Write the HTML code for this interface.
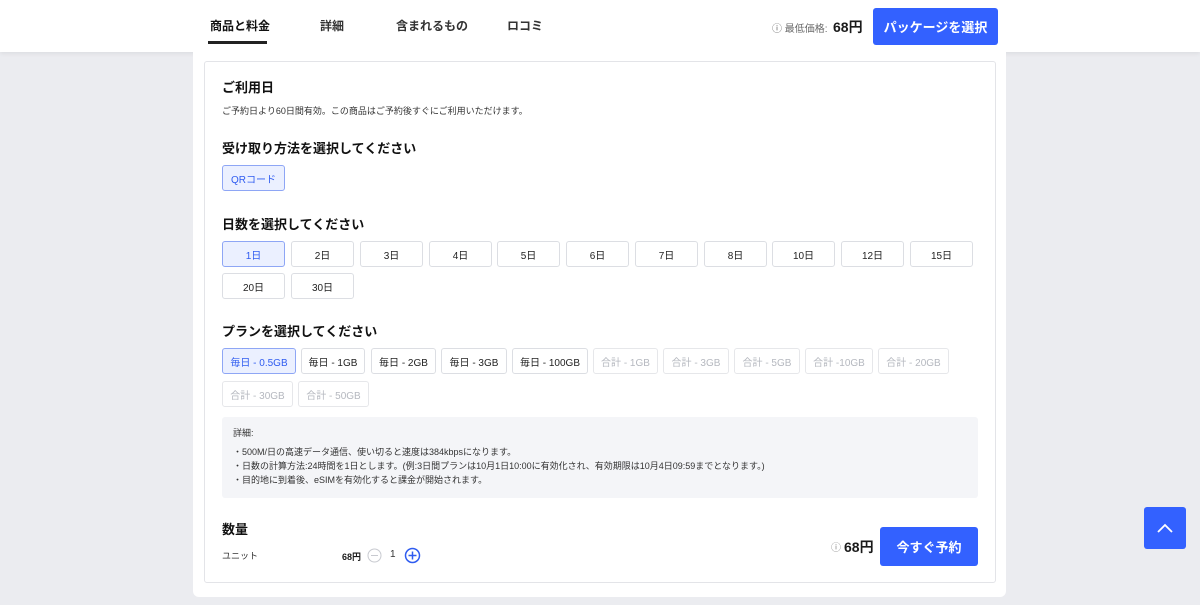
<!DOCTYPE html>
<html><head><meta charset="utf-8"><style>
*{box-sizing:border-box;margin:0;padding:0}
body{width:1200px;height:605px;background:#ebecf0;font-family:"Liberation Sans","Noto Sans CJK JP",sans-serif;color:#1a1a1a;position:relative;overflow:hidden}
.hdr{position:absolute;left:0;top:0;width:1200px;height:52px;background:#fff;box-shadow:0 2px 4px rgba(0,0,0,.06)}
.tab{position:absolute;top:17px;font-size:12px;font-weight:bold;color:#333}
.ul{position:absolute;left:208px;top:41px;width:59px;height:3px;background:#222}
.a{position:absolute}
.panel{position:absolute;left:193px;top:52px;width:813px;height:545px;background:#fff;border-radius:0 0 6px 6px}
.card{position:absolute;left:204px;top:61px;width:792px;height:522px;border:1px solid #e3e4e8;border-radius:3px}
h3{position:absolute;left:222px;font-size:13px;font-weight:bold;color:#111}
.b{position:absolute;height:26px;border:1px solid #dcdee3;border-radius:3px;font-size:10px;color:#222;display:flex;align-items:center;justify-content:center;background:#fff}
.sel{background:#ebf0ff;border-color:#8ea6f5;color:#2f5cf0}
.dis{color:#b5b8bf;border-color:#e6e7ea}
.blue{background:#3361ff;color:#fff;font-weight:bold;border-radius:3px;display:flex;align-items:center;justify-content:center}
</style></head><body>
<div class="hdr">
<div class="tab" style="left:210px;color:#111">商品と料金</div>
<div class="ul"></div>
<div class="tab" style="left:320px">詳細</div>
<div class="tab" style="left:396px">含まれるもの</div>
<div class="tab" style="left:507px">ロコミ</div>
<div class="a" style="left:772px;top:20px;font-size:10px;color:#666">ⓘ 最低価格:</div>
<div class="a" style="left:833px;top:17px;font-size:14px;font-weight:bold">68円</div>
<div class="a blue" style="left:873px;top:8px;width:125px;height:37px;font-size:13px">パッケージを選択</div>
</div>
<div class="panel"></div>
<div class="card"></div>
<h3 style="top:77px">ご利用日</h3>
<div class="a" style="left:222px;top:104px;font-size:9px;color:#333">ご予約日より60日間有効。この商品はご予約後すぐにご利用いただけます。</div>
<h3 style="top:138px">受け取り方法を選択してください</h3>
<div class="b sel" style="left:222px;top:165px;width:63px">QRコード</div>
<h3 style="top:214px">日数を選択してください</h3>
<div class="b sel" style="left:222px;top:241px;width:63px">1日</div>
<div class="b" style="left:291px;top:241px;width:63px">2日</div>
<div class="b" style="left:360px;top:241px;width:63px">3日</div>
<div class="b" style="left:429px;top:241px;width:63px">4日</div>
<div class="b" style="left:497px;top:241px;width:63px">5日</div>
<div class="b" style="left:566px;top:241px;width:63px">6日</div>
<div class="b" style="left:635px;top:241px;width:63px">7日</div>
<div class="b" style="left:704px;top:241px;width:63px">8日</div>
<div class="b" style="left:772px;top:241px;width:63px">10日</div>
<div class="b" style="left:841px;top:241px;width:63px">12日</div>
<div class="b" style="left:910px;top:241px;width:63px">15日</div>
<div class="b" style="left:222px;top:273px;width:63px">20日</div>
<div class="b" style="left:291px;top:273px;width:63px">30日</div>
<h3 style="top:321px">プランを選択してください</h3>
<div class="b sel" style="left:222px;top:348px;width:74px">毎日 - 0.5GB</div>
<div class="b" style="left:301px;top:348px;width:64px">毎日 - 1GB</div>
<div class="b" style="left:371px;top:348px;width:65px">毎日 - 2GB</div>
<div class="b" style="left:441px;top:348px;width:66px">毎日 - 3GB</div>
<div class="b" style="left:512px;top:348px;width:76px">毎日 - 100GB</div>
<div class="b dis" style="left:593px;top:348px;width:65px">合計 - 1GB</div>
<div class="b dis" style="left:663px;top:348px;width:66px">合計 - 3GB</div>
<div class="b dis" style="left:734px;top:348px;width:66px">合計 - 5GB</div>
<div class="b dis" style="left:805px;top:348px;width:68px">合計 -10GB</div>
<div class="b dis" style="left:878px;top:348px;width:71px">合計 - 20GB</div>
<div class="b dis" style="left:222px;top:381px;width:71px">合計 - 30GB</div>
<div class="b dis" style="left:298px;top:381px;width:71px">合計 - 50GB</div>
<div class="a" style="left:222px;top:417px;width:756px;height:81px;background:#f4f5f8;border-radius:3px"></div>
<div class="a" style="left:233px;top:426px;font-size:9px;color:#333;line-height:14px">詳細:<div style="height:5px"></div>・500M/日の高速データ通信、使い切ると速度は384kbpsになります。<br>・日数の計算方法:24時間を1日とします。(例:3日間プランは10月1日10:00に有効化され、有効期限は10月4日09:59までとなります。)<br>・目的地に到着後、eSIMを有効化すると課金が開始されます。</div>
<h3 style="top:519px">数量</h3>
<div class="a" style="left:222px;top:549px;font-size:9px;color:#333">ユニット</div>
<div class="a" style="left:342px;top:550px;font-size:9px;font-weight:bold">68円</div>
<svg class="a" style="left:367px;top:548px" width="15" height="15"><circle cx="7.5" cy="7.5" r="6.5" fill="none" stroke="#c8cad0"/><path d="M4 7.5h7" stroke="#c8cad0"/></svg>
<div class="a" style="left:390px;top:549px;font-size:10px;color:#333">1</div>
<svg class="a" style="left:404px;top:547px" width="17" height="17"><circle cx="8.5" cy="8.5" r="7" fill="none" stroke="#2f5cf0" stroke-width="1.5"/><path d="M4.5 8.5h8M8.5 4.5v8" stroke="#2f5cf0" stroke-width="1.5"/></svg>
<div class="a" style="left:831px;top:539px;font-size:10px;color:#888">ⓘ</div>
<div class="a" style="left:844px;top:537px;font-size:14px;font-weight:bold">68円</div>
<div class="a blue" style="left:880px;top:527px;width:98px;height:39px;font-size:13px">今すぐ予約</div>
<div class="a blue" style="left:1144px;top:507px;width:42px;height:42px"><svg width="16" height="10"><path d="M1 9l7-7 7 7" fill="none" stroke="#fff" stroke-width="1.8"/></svg></div>
</body></html>
